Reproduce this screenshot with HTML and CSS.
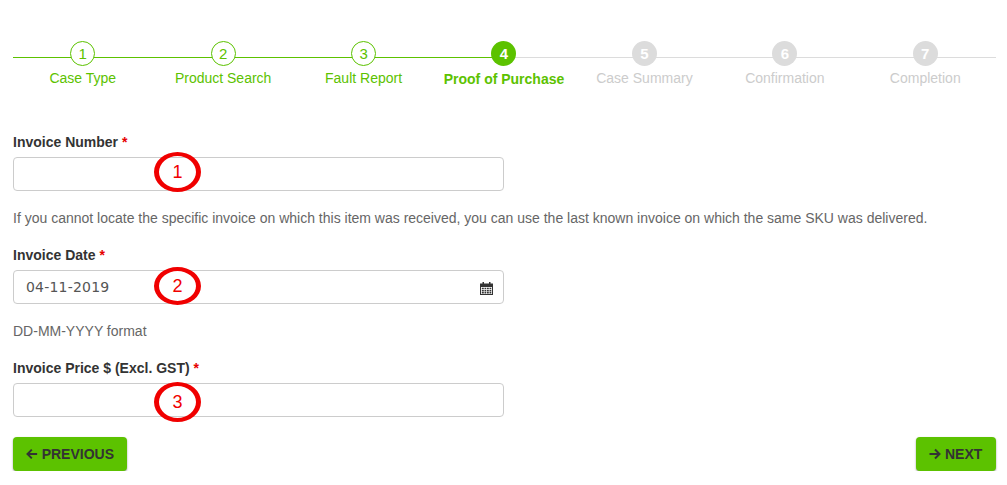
FILE: index.html
```html
<!DOCTYPE html>
<html lang="en">
<head>
<meta charset="utf-8">
<title>Proof of Purchase</title>
<link rel="stylesheet" href="styles.css">
</head>
<body>
<main class="page">
  <ol class="stepper">
    <li class="step done"><span class="dot">1</span><span class="name">Case Type</span></li>
    <li class="step done"><span class="dot">2</span><span class="name">Product Search</span></li>
    <li class="step done"><span class="dot">3</span><span class="name">Fault Report</span></li>
    <li class="step current"><span class="dot">4</span><span class="name">Proof of Purchase</span></li>
    <li class="step"><span class="dot">5</span><span class="name">Case Summary</span></li>
    <li class="step"><span class="dot">6</span><span class="name">Confirmation</span></li>
    <li class="step"><span class="dot">7</span><span class="name">Completion</span></li>
  </ol>
  <form class="form">
    <div class="field">
      <label class="label" for="num">Invoice Number <span class="req">*</span></label>
      <div class="control">
        <input class="input" id="num" type="text">
        <span class="callout c1">1</span>
      </div>
      <p class="help">If you cannot locate the specific invoice on which this item was received, you can use the last known invoice on which the same SKU was delivered.</p>
    </div>
    <div class="field">
      <label class="label" for="date">Invoice Date <span class="req">*</span></label>
      <div class="control">
        <input class="input date" id="date" type="text" value="04-11-2019">
        <span class="callout c2">2</span>
        <svg class="cal" viewBox="0 0 13 14" width="13" height="14" aria-hidden="true">
          <path fill="#333" d="M0 2.5h2.5V1h1.5v1.5h5V1h1.5v1.5H13V14H0zM1 6v7h11V6z"/>
          <path fill="#333" d="M1.8 6.8h2v1.5h-2zM4.5 6.8h1.8v1.5H4.5zM7 6.8h1.8v1.5H7zM9.5 6.8h1.8v1.5H9.5zM1.8 9h2v1.5h-2zM4.5 9h1.8v1.5H4.5zM7 9h1.8v1.5H7zM9.5 9h1.8v1.5H9.5zM1.8 11.1h2v1.4h-2zM4.5 11.1h1.8v1.4H4.5zM7 11.1h1.8v1.4H7zM9.5 11.1h1.8v1.4H9.5z"/>
        </svg>
      </div>
      <p class="help">DD-MM-YYYY format</p>
    </div>
    <div class="field last">
      <label class="label" for="price">Invoice Price $ (Excl. GST) <span class="req">*</span></label>
      <div class="control">
        <input class="input" id="price" type="text">
        <span class="callout c3">3</span>
      </div>
    </div>
    <div class="actions">
      <button class="btn prev" type="button">
        <svg class="arrow" viewBox="0 0 12 12" width="12" height="12" aria-hidden="true"><path d="M11.5 6H1.5M6 1.5 1.5 6 6 10.5" fill="none" stroke="#333" stroke-width="2"/></svg>PREVIOUS
      </button>
      <button class="btn next" type="button">
        <svg class="arrow" viewBox="0 0 12 12" width="12" height="12" aria-hidden="true"><path d="M.5 6h10M6 1.5 10.5 6 6 10.5" fill="none" stroke="#333" stroke-width="2"/></svg>NEXT
      </button>
    </div>
  </form>
</main>
</body>
</html>
```
FILE: styles.css
```css
* { box-sizing: border-box; }
html, body { margin: 0; padding: 0; background: #fff; }
body {
  font-family: "Liberation Sans", Arial, sans-serif;
  color: #333;
  font-size: 14px;
}
.page { padding: 41px 11px 0 13px; }

.stepper {
  list-style: none;
  margin: 0;
  padding: 0;
  display: grid;
  grid-template-columns: repeat(7, 1fr);
}
.step {
  position: relative;
  display: flex;
  flex-direction: column;
  align-items: center;
  padding-right: 1px;
  color: #ccc;
}
.step::before {
  content: "";
  position: absolute;
  left: 0;
  right: 0;
  top: 16px;
  height: 1px;
  background: #dcdcdc;
}
.step.done::before { background: #5cc200; }
.step.current::before { background: linear-gradient(to right, #5cc200 50%, #dcdcdc 50%); }
.dot {
  position: relative;
  width: 25px;
  height: 25px;
  border-radius: 50%;
  display: flex;
  align-items: center;
  justify-content: center;
  font-size: 15px;
  font-weight: 700;
  background: #dcdcdc;
  color: #fff;
}
.done .dot {
  background: #fff;
  border: 1px solid #5cc200;
  color: #5cc200;
  font-weight: 400;
}
.current .dot { background: #5cc200; }
.name {
  margin-top: 4px;
  font-size: 14px;
  line-height: 17px;
  white-space: nowrap;
}
.done .name, .current .name { color: #5cc200; }
.current .name { font-weight: 700; margin-top: 5px; }

.form { margin-top: 46px; }
.field { margin-bottom: 21px; }
.field.last { margin-bottom: 20px; }
.label {
  display: block;
  font-size: 14px;
  line-height: 16px;
  font-weight: 700;
  color: #333;
  margin-bottom: 7px;
}
.req { color: #e60000; }
.control { position: relative; width: 491px; }
.input {
  display: block;
  width: 100%;
  height: 34px;
  padding: 0 12px;
  border: 1px solid #ccc;
  border-radius: 4px;
  background: #fff;
  outline: none;
}
.date {
  font-family: "DejaVu Sans", sans-serif;
  font-size: 14px;
  letter-spacing: .2px;
  color: #555;
}
.callout {
  position: absolute;
  left: 141px;
  width: 47px;
  height: 40px;
  border-style: solid;
  border-color: #f00000;
  border-width: 4px 5px;
  border-radius: 50%;
  display: flex;
  align-items: center;
  justify-content: center;
  font-size: 18px;
  color: #f00000;
}
.c1 { top: -5px; }
.c2 { top: -3px; height: 38px; }
.c3 { top: -1px; }
.cal {
  position: absolute;
  right: 11px;
  top: 11px;
}
.help {
  margin: 19px 0 0;
  font-size: 14px;
  line-height: 16px;
  color: #666;
}

.actions {
  display: flex;
  justify-content: space-between;
}
.btn {
  display: flex;
  align-items: center;
  gap: 4px;
  height: 34px;
  padding: 0 13px;
  border: 0;
  border-radius: 4px;
  background: #5cc200;
  color: #333;
  font-family: inherit;
  font-size: 14px;
  font-weight: 700;
  box-shadow: 0 1px 2px rgba(0, 0, 0, .4);
}
.prev { width: 114px; }
.next { width: 80px; }
```
